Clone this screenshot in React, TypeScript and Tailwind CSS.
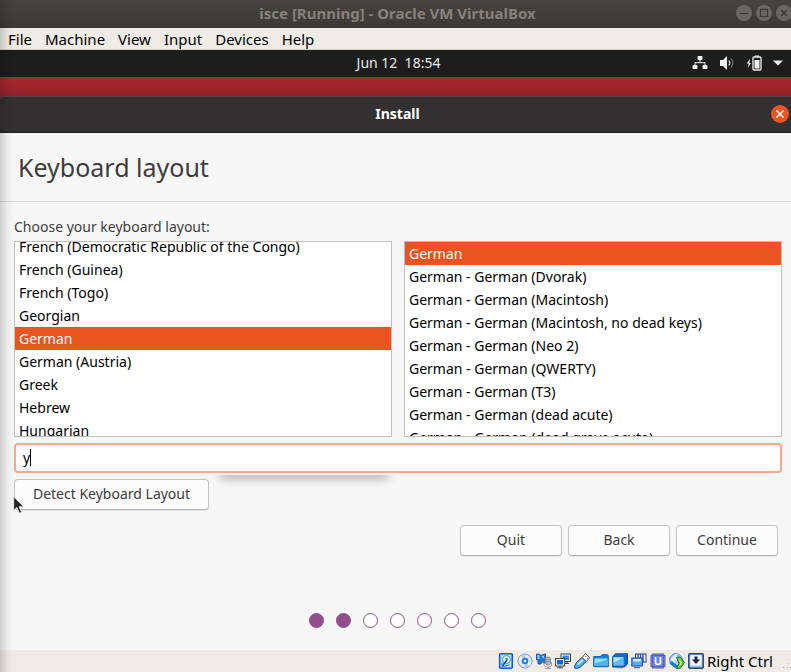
import { useEffect, useRef, useState } from "react";
import type { ReactNode } from "react";

const menus = ["File", "Machine", "View", "Input", "Devices", "Help"];

const layouts = [
  "French (Democratic Republic of the Congo)",
  "French (Guinea)",
  "French (Togo)",
  "Georgian",
  "German",
  "German (Austria)",
  "Greek",
  "Hebrew",
  "Hungarian",
];

const variants = [
  "German",
  "German - German (Dvorak)",
  "German - German (Macintosh)",
  "German - German (Macintosh, no dead keys)",
  "German - German (Neo 2)",
  "German - German (QWERTY)",
  "German - German (T3)",
  "German - German (dead acute)",
  "German - German (dead grave acute)",
];

function ListBox({ label, items, scroll }: { label: string; items: string[]; scroll: number }) {
  const box = useRef<HTMLDivElement>(null);
  const [selected, setSelected] = useState("German");
  useEffect(() => {
    if (box.current) box.current.scrollTop = scroll;
  }, [scroll]);
  return (
    <div
      ref={box}
      role="listbox"
      aria-label={label}
      className="h-49 min-w-0 flex-1 overflow-hidden border border-[#c0bfbd] bg-white"
    >
      {items.map((item) => (
        <button
          key={item}
          type="button"
          role="option"
          aria-selected={item === selected}
          onClick={() => setSelected(item)}
          className={
            item === selected
              ? "block h-[23px] w-full bg-[#e95420] px-1 text-left leading-[23px] whitespace-nowrap text-white"
              : "block h-[23px] w-full px-1 text-left leading-[23px] whitespace-nowrap text-black"
          }
        >
          {item}
        </button>
      ))}
    </div>
  );
}

function WindowControl({ label, children }: { label: string; children: ReactNode }) {
  return (
    <button type="button" aria-label={label} className="size-4 rounded-full bg-[#686761]">
      <svg viewBox="0 0 16 16" className="size-4" fill="none" stroke="#393833" strokeWidth="1.2">
        {children}
      </svg>
    </button>
  );
}

function StatusIcon({ label, children }: { label: string; children: ReactNode }) {
  return (
    <button type="button" aria-label={label} className="size-4">
      <svg viewBox="0 0 16 16" className="size-4">
        {children}
      </svg>
    </button>
  );
}

function StatusIcons() {
  return (
    <div className="flex items-center gap-[3px]">
      <StatusIcon label="Hard disks">
        <rect x="1.7" y=".8" width="12.6" height="14.4" rx="1" fill="#b9e4ff" stroke="#0b5fc8" strokeWidth="1.6" />
        <circle cx="8.500" cy="6.500" r="4" fill="#e8f7ff" stroke="#3c9be8" />
        <path d="M4 13.500 9 7" fill="none" stroke="#0b4fa8" strokeWidth="1.600" />
        <path d="M4.500 9.500C3 12 5 14 7.500 13q2-1 3.500-1" fill="none" stroke="#1c6fd0" />
        <circle cx="8.500" cy="6" r="1.300" fill="#2d8ae0" />
      </StatusIcon>
      <StatusIcon label="Optical drives">
        <circle cx="8" cy="8" r="7" fill="#dbe9fa" stroke="#7d93c4" />
        <path d="M8 8 4 2.500A7 7 0 0 1 8 1.300ZM8 8l4.500 5A7 7 0 0 1 8 14.700Z" fill="#a9d0f7" />
        <path d="M8 8 1.500 7A7 7 0 0 1 3.500 3ZM8 8l6.500 1.500A7 7 0 0 1 12 13Z" fill="#fff" />
        <circle cx="8" cy="8" r="2.300" fill="#fff" stroke="#1583ea" strokeWidth="2" />
      </StatusIcon>
      <StatusIcon label="Audio">
        <path d="M.5 1h3l1 1.500L9.500.7v9.800L5.500 8.500 5 11H2V7H.5Z" fill="#1f78da" stroke="#12499a" strokeWidth=".8" />
        <path d="M1.500 2h2v4h-2ZM5.500 3.500 8 2.500v3Z" fill="#8fd4ff" />
        <rect x="9.500" y="4" width="5" height="8" rx="2" fill="#b5b5b5" stroke="#858585" strokeWidth=".8" />
        <path d="M8 9v3q0 2 4 2t3.500-2V9M12 14v1.500M9 15.500h6M9.500 6.500H14M9.500 8.500H14" fill="none" stroke="#888" strokeWidth=".8" />
      </StatusIcon>
      <StatusIcon label="Network">
        <rect x="6" y="1" width="9.500" height="7.500" fill="#fff" stroke="#393f49" />
        <rect x="7.500" y="2.500" width="6.500" height="4.500" fill="#2f86e4" />
        <path d="M10 10.500h4M12 8.500v2" fill="none" stroke="#393f49" />
        <rect x=".6" y="5.500" width="9" height="7.500" fill="#fff" stroke="#393f49" />
        <rect x="2" y="7" width="6" height="4.500" fill="#1268d2" />
        <path d="M5 13v1.500M2 14.800h6" fill="none" stroke="#393f49" />
      </StatusIcon>
      <StatusIcon label="USB">
        <path d="M.8 15.200q-1-2.700 2-6L8 4.500l4.300 4L7 13.500q-3.500 3-6.200 1.700Z" fill="#4fabf5" stroke="#174e9e" />
        <path d="m3 11 5-4.700 1.700 1L4.500 12Z" fill="#d3f1ff" />
        <path d="m8 4.500 3.500-4 4.200 4-3.400 4Z" fill="#f4f4f4" stroke="#595959" />
        <path d="m11.300 3 1 1m.7.800 1 .8" stroke="#555" />
      </StatusIcon>
      <StatusIcon label="Shared folders">
        <path d="M.7 13.700V3.500h7L9 1.700h5.500l.8 1v11Z" fill="#1384df" stroke="#0c5fb5" />
        <path d="M1.500 5.500h13v7.500h-13Z" fill="#9adfff" />
        <path d="M1.500 13v-2.500l13-4V13Z" fill="#4db5f5" />
      </StatusIcon>
      <StatusIcon label="Display">
        <path d="M.7 3.500 3.500.8h12V11l-3 3H.7Z" fill="#0f6ac9" stroke="#0b4fa0" />
        <rect x="1.500" y="4.200" width="10.300" height="8.500" fill="#62b8f8" />
        <path d="M1.500 4.200h10.300L1.500 10Z" fill="#b4e3ff" />
        <path d="M4.500 14v1.300h6L12 14Z" fill="#777" />
      </StatusIcon>
      <StatusIcon label="Recording">
        <rect x="4.500" y="1" width="10.500" height="8" fill="#fff" stroke="#223aa4" />
        <path d="M7 1v8M9.500 1v4M12 1v8" stroke="#3952c8" strokeWidth="1.500" />
        <rect x=".8" y="5" width="10.500" height="8" fill="#5baaf0" stroke="#1a45af" />
        <path d="M2 6h8v2.500H2Z" fill="#d1edff" />
        <path d="M3 14.700h6" stroke="#444b72" />
      </StatusIcon>
      <StatusIcon label="Processor">
        <path d="M2.500 1h12M2.500 15h12M1 2.500v12M15 2.500v12" stroke="#3238a0" strokeWidth="1.500" strokeDasharray="1 1" />
        <rect x="2" y="2" width="12" height="12" fill="#6c86e4" stroke="#3445b8" />
        <path d="M5.500 4v5q0 2.500 2.500 2.500t2.500-2.500V4" fill="none" stroke="#fff" strokeWidth="1.600" />
      </StatusIcon>
      <StatusIcon label="Mouse integration">
        <circle cx="7" cy="7" r="6.300" fill="#a6d2f7" stroke="#4179bd" />
        <path d="M1.500 6 7 1l3 2-5.500 8Z" fill="#e4f4ff" />
        <path d="m.5 10.500 6 5 2.500-2.500-6-5Z" fill="#1f78d4" />
        <path d="M8 .8Q13 1.500 13.800 7L12 8 8 5Z" fill="#8cc6f2" />
        <path d="m7.500 4.500 3.500-.5 4.500 5.500L11.500 15l-4 .5 2.500-5Z" fill="#6cc93c" stroke="#236f14" />
        <path d="m9.500 6 3.500 3.500-3 4.500 1.500-4Z" fill="#eaffcf" />
      </StatusIcon>
      <StatusIcon label="Keyboard capture">
        <rect x=".8" y=".8" width="14.400" height="14.400" rx="1" fill="#9fc3e6" stroke="#26476f" strokeWidth="1.500" />
        <rect x="2.500" y="2" width="11" height="10.500" rx="1" fill="#f0f7ff" />
        <path d="M6.500 3.500h3v3h2.700L8 11 3.800 6.500h2.700Z" fill="#20262d" />
      </StatusIcon>
    </div>
  );
}

const pushButton =
  "h-[31px] rounded-[4px] border border-[#c4c3c1] border-b-[#b5b4b2] bg-[#fcfcfc] pb-0.5 text-[#3d3d3d] shadow-[0_1px_1px_rgba(0,0,0,0.08)]";

export default function App() {
  const [query, setQuery] = useState("y");
  return (
    <div className="relative flex min-h-screen flex-col overflow-hidden bg-[#f7f7f7] font-['Noto_Sans','Open_Sans',sans-serif] text-[14px] leading-5">
      <header className="grid h-7 grid-cols-[1fr_auto_1fr] items-center bg-linear-to-b from-[#45433e] to-[#3b3a36] pb-0.5 pl-1">
        <h1 className="col-start-2 text-[15px] font-bold text-[#85827b]">isce [Running] - Oracle VM VirtualBox</h1>
        <div className="-mr-px flex justify-end gap-1">
          <WindowControl label="Minimize">
            <path d="M4 8.500h8" />
          </WindowControl>
          <WindowControl label="Maximize">
            <rect x="4.500" y="4.500" width="7" height="7" />
          </WindowControl>
          <WindowControl label="Close">
            <path d="m5 5 6 6m0-6-6 6" />
          </WindowControl>
        </div>
      </header>

      <nav className="flex h-[22px] items-center gap-[13px] border-b border-[#d5d2ce] bg-[#efebe7] px-2 text-[15px] text-black">
        {menus.map((menu) => (
          <button key={menu} type="button">
            {menu}
          </button>
        ))}
      </nav>

      <div className="grid h-[27px] grid-cols-[1fr_auto_1fr] items-center bg-[#1d1d1d] pr-2 pb-0.5 pl-3.5 text-[#e8e8e8]">
        <time className="col-start-2 whitespace-pre">Jun 12  18:54</time>
        <div className="flex items-center justify-end gap-[11px]">
          <svg viewBox="0 0 16 16" className="size-4" fill="#f2f2f2">
            <rect x="5.500" y="1" width="5" height="4" rx="1" />
            <rect x=".5" y="10" width="5" height="4" rx="1" />
            <rect x="10.500" y="10" width="5" height="4" rx="1" />
            <path d="M8 5v3M3 10V7.700h10V10" fill="none" stroke="#f2f2f2" />
          </svg>
          <svg viewBox="0 0 16 16" className="size-4" fill="none">
            <path d="M1 5h3l4-4v14l-4-4H1Z" fill="#f2f2f2" />
            <path d="M9.800 5.500q2 2.500 0 5" stroke="#ddd" strokeWidth="1.200" />
            <path d="M12 3.500q3.500 4.500 0 9" stroke="#777" strokeWidth="1.200" />
          </svg>
          <svg viewBox="0 0 16 16" className="size-4">
            <path d="M4 4 .7 8.500h2L2 12.500l3-4.500H3.300Z" fill="#f2f2f2" />
            <path d="M9 1h4" stroke="#f2f2f2" />
            <rect x="7" y="2" width="8" height="13" rx="1" fill="none" stroke="#f2f2f2" strokeWidth="1.300" />
            <rect x="8.500" y="5" width="5" height="8.500" fill="#f2f2f2" />
          </svg>
          <svg viewBox="0 0 10 6" className="h-1.5 w-2.5" fill="#f2f2f2">
            <path d="M0 .5h10l-5 5Z" />
          </svg>
        </div>
      </div>

      <div className="bg-linear-to-b from-[#ab272e] to-[#83202a] to-50% pt-[19px]">
        <div className="grid h-[37px] grid-cols-[1fr_auto_1fr] items-center rounded-tl-[4px] border-t border-b border-t-[#4b4948] border-b-[#201f1f] bg-[#323030] pr-0.5 pb-px pl-1.5 text-white">
          <h2 className="col-start-2 font-bold">Install</h2>
          <button
            type="button"
            aria-label="Close installer"
            className="size-[18px] justify-self-end rounded-full bg-[#e95420]"
          >
            <svg viewBox="0 0 18 18" className="size-[18px]" fill="none" stroke="#fff" strokeWidth="1.500">
              <path d="m5.500 5.500 7 7m0-7-7 7" />
            </svg>
          </button>
        </div>
      </div>

      <main className="flex flex-1 flex-col text-[#3d3d3d]">
        <h3 className="border-b border-[#dadada] py-[18px] pl-[18px] text-[25px] leading-8">Keyboard layout</h3>

        <section className="flex flex-col gap-1.5 pt-4 pr-[9px] pl-3.5">
          <div>
            <p className="h-[23px] leading-[18px]">Choose your keyboard layout:</p>
            <div className="flex gap-3">
              <ListBox label="Keyboard layout" items={layouts} scroll={7} />
              <ListBox label="Keyboard variant" items={variants} scroll={0} />
            </div>
          </div>
          <div className="relative flex">
            <input
              type="text"
              aria-label="Type here to test your keyboard"
              value={query}
              onChange={(event) => setQuery(event.target.value)}
              className="h-[30px] w-full rounded-[4px] border-2 border-[#f4aa90] bg-white px-[7px] pb-0.5 text-black outline-none"
            />
            {query === "y" && <span className="absolute top-1.5 left-4 h-[17px] w-px bg-black" />}
          </div>
          <div className="relative self-start">
            <button type="button" className={`${pushButton} w-[195px]`}>
              Detect Keyboard Layout
            </button>
            <div className="absolute -top-1 left-[195px] h-4 w-[190px] overflow-hidden">
              <div className="mx-3 -mt-1 h-1 rounded-full shadow-[0_2px_10px_2px_rgba(0,0,0,0.3)]" />
            </div>
            <svg viewBox="0 0 12 18" className="absolute top-[17px] -left-px h-[18px] w-3">
              <path
                d="M.7.8v13.500l3.200-2.800 2.500 5.700 2.200-1-2.500-5.500h4.500Z"
                fill="#262626"
                stroke="#eee"
                strokeWidth=".8"
              />
            </svg>
          </div>
        </section>

        <div className="flex justify-end gap-1.5 pt-[15px] pr-[13px]">
          <button type="button" className={`${pushButton} w-[102px]`}>
            Quit
          </button>
          <button type="button" className={`${pushButton} w-[102px]`}>
            Back
          </button>
          <button type="button" className={`${pushButton} w-[102px]`}>
            Continue
          </button>
        </div>

        <ol className="mt-auto flex justify-center gap-3 pb-[22px] pl-1">
          {[1, 2, 3, 4, 5, 6, 7].map((step) => (
            <li
              key={step}
              className={
                step <= 2
                  ? "size-[15px] rounded-full border border-[#924d8b] bg-[#924d8b]"
                  : "size-[15px] rounded-full border border-[#924d8b] bg-white"
              }
            />
          ))}
        </ol>
      </main>

      <footer className="relative flex h-[22px] items-center justify-end gap-[3px] bg-[#efebe7] pr-[18px] text-[15px] text-black">
        <StatusIcons />
        <span>Right Ctrl</span>
        <svg viewBox="0 0 10 10" className="absolute right-0 bottom-0 size-2.5" fill="#b5b1ac">
          <path d="M6 1h1v1H6ZM2 5h1v1H2ZM6 5h1v1H6ZM9 5h1v1H9Z" />
        </svg>
      </footer>

      <div className="pointer-events-none absolute inset-y-0 left-0 w-3.5 bg-linear-to-r from-black/16 via-black/5 to-transparent" />
    </div>
  );
}
